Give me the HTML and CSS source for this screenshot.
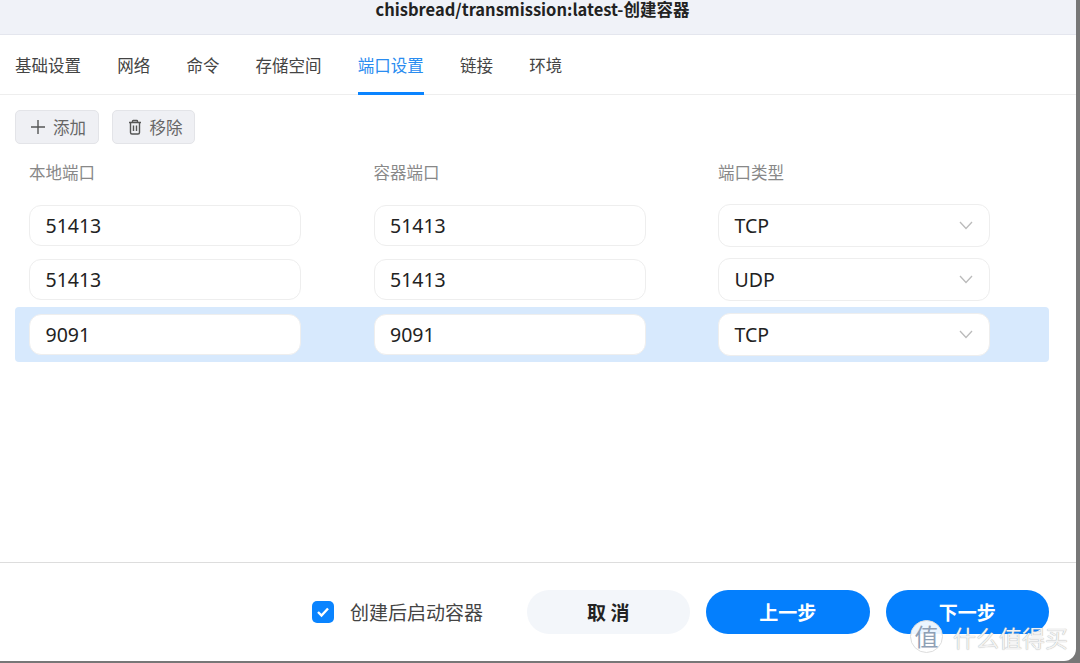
FILE: index.html
```html
<!DOCTYPE html>
<html lang="zh-CN">
<head>
    <meta charset="UTF-8">
    <title>创建容器</title>
    <link rel="stylesheet" href="styles.css">
</head>
<body>
<div class="dialog">
    <div class="title-bar">chisbread/transmission:latest-创建容器</div>
    <ul class="tabs">
        <li>基础设置</li>
        <li>网络</li>
        <li>命令</li>
        <li>存储空间</li>
        <li class="active">端口设置</li>
        <li>链接</li>
        <li>环境</li>
    </ul>
    <div class="content">
        <div class="toolbar">
            <a class="tool-btn" href="javascript:;">
                <svg width="16" height="16" viewBox="0 0 16 16"><path d="M8 1v14M1 8h14" fill="none" stroke="#555" stroke-width="1.4"/></svg>
                添加
            </a>
            <a class="tool-btn" href="javascript:;">
                <svg width="16" height="16" viewBox="0 0 16 16"><path d="M2 3.5h12M5.5 3.5V2.2q0-.7.7-.7h3.6q.7 0 .7.7v1.3M3.5 3.5v10q0 1.5 1.5 1.5h6q1.5 0 1.5-1.5v-10M6.5 6.5v5.5M9.5 6.5v5.5" fill="none" stroke="#555" stroke-width="1.4"/></svg>
                移除
            </a>
        </div>
        <div class="row head">
            <div>本地端口</div>
            <div>容器端口</div>
            <div>端口类型</div>
        </div>
        <div class="row">
            <div class="field">51413</div>
            <div class="field">51413</div>
            <div class="field select">TCP<svg width="14" height="9" viewBox="0 0 14 9"><path d="M1 1l6 6.5L13 1" fill="none" stroke="#bbb" stroke-width="1.3"/></svg></div>
        </div>
        <div class="row">
            <div class="field">51413</div>
            <div class="field">51413</div>
            <div class="field select">UDP<svg width="14" height="9" viewBox="0 0 14 9"><path d="M1 1l6 6.5L13 1" fill="none" stroke="#bbb" stroke-width="1.3"/></svg></div>
        </div>
        <div class="row selected">
            <div class="field">9091</div>
            <div class="field">9091</div>
            <div class="field select">TCP<svg width="14" height="9" viewBox="0 0 14 9"><path d="M1 1l6 6.5L13 1" fill="none" stroke="#bbb" stroke-width="1.3"/></svg></div>
        </div>
    </div>
    <div class="footer">
        <label class="check">
            <span class="check-box"><svg width="14" height="12" viewBox="0 0 14 12"><path d="M2 6l3.5 3.5L12 2.5" fill="none" stroke="#fff" stroke-width="2.4"/></svg></span>
            创建后启动容器
        </label>
        <a class="btn btn-gray" href="javascript:;">取 消</a>
        <a class="btn btn-blue" href="javascript:;">上一步</a>
        <a class="btn btn-blue" href="javascript:;">下一步</a>
    </div>
    <div class="mark">
        <span class="mark-logo">值</span>
        <span class="mark-text">什么值得买</span>
    </div>
</div>
</body>
</html>
```
FILE: styles.css
```css
*{margin:0;padding:0;list-style:none;box-sizing:border-box;}
a{text-decoration:none;color:inherit;}

html,body{height:100%;}
body{background:#777;font-family:"Noto Sans CJK SC","Noto Sans",sans-serif;overflow:hidden;}

.dialog{width:1076px;height:660.5px;background:#fff;border-radius:0 0 12px 0;position:relative;overflow:hidden;display:flex;flex-direction:column;}

.title-bar{height:35px;flex:none;background:#f0f2f8;border-bottom:1px solid #e4e6ee;text-align:center;font-size:16.5px;font-weight:700;line-height:19px;color:#222;padding-right:11px;}

.tabs{display:flex;gap:36.2px;height:60px;flex:none;padding-left:15px;border-bottom:1px solid #eee;}
.tabs li{font-size:16.5px;line-height:60px;color:#444;height:60px;}
.tabs li.active{color:#2a8cf0;border-bottom:3px solid #0a84ff;}

.content{flex:1;padding:15px 27px 0 15px;}

.toolbar{display:flex;gap:13px;}
.tool-btn{display:flex;align-items:center;gap:7px;height:34px;padding:0 11.5px 0 14px;background:#eff0f4;border:1px solid #e3e4e8;border-radius:5px;font-size:16.5px;color:#666;}

.row{display:grid;grid-template-columns:272px 272px 272px;column-gap:72.5px;padding:0 14px;height:54.5px;align-items:center;border-radius:4px;}
.row.head{height:54px;font-size:16.5px;line-height:24px;color:#888;align-items:start;padding-top:15.5px;}
.row.selected{background:#d7e9fd;}

.field{height:41px;background:#fff;border:1px solid #eee;border-radius:12px;padding:0 15.5px;font-size:19.5px;line-height:39px;color:#222;font-family:"Noto Sans","Noto Sans CJK SC",sans-serif;}
.select{display:flex;justify-content:space-between;align-items:center;height:43px;padding-right:16px;}

.footer{height:99px;flex:none;border-top:1px solid #ddd;display:flex;align-items:center;justify-content:flex-end;padding:0 27px 0 0;}
.check{display:flex;align-items:center;gap:16px;font-size:19px;color:#444;margin-right:43.5px;}
.check-box{width:22px;height:22px;background:#0a84ff;border-radius:5px;display:flex;align-items:center;justify-content:center;}

.btn{width:163.5px;height:44px;border-radius:22px;text-align:center;line-height:44px;font-size:19px;font-weight:700;margin-left:16px;}
.btn-gray{background:#f3f6fa;color:#222;margin-left:0;}
.btn-blue{background:#047ffd;color:#fff;}

.mark{position:absolute;left:910px;top:620px;display:flex;align-items:center;gap:10px;}
.mark-logo{width:33px;height:33px;border-radius:50%;border:1px solid #ddd;background:rgba(255,255,255,.92);color:#8fa0b5;font-size:24px;line-height:30px;text-align:center;}
.mark-text{font-size:23px;line-height:32px;color:#f2f2f2;text-shadow:0 0 1px #999;}
```
